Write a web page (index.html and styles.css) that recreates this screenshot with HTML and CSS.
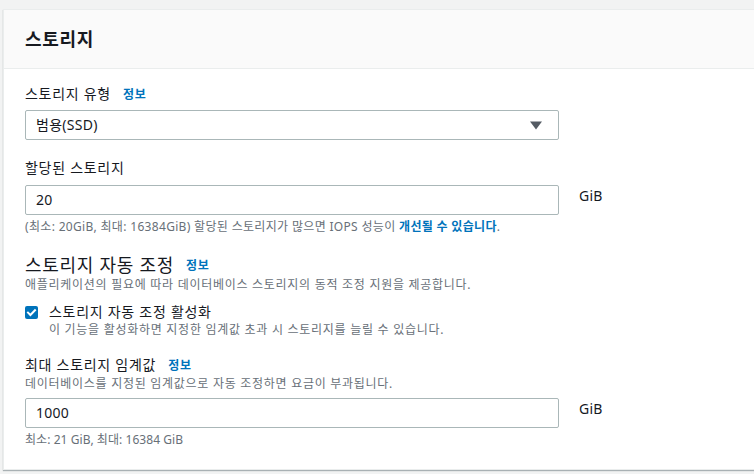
FILE: index.html
```html
<!DOCTYPE html>
<html lang="ko">
<head>
<meta charset="utf-8">
<title>스토리지</title>
<link rel="stylesheet" href="styles.css">
</head>
<body>
<div class="card">
  <div class="card-header">
    <h2 class="card-title">스토리지</h2>
  </div>
  <div class="card-body">
    <div class="field field-type">
      <div class="label-row"><span class="label">스토리지 유형</span><a class="info">정보</a></div>
      <div class="control-row">
        <div class="select">
          <span>범용(SSD)</span>
          <svg class="caret" width="12" height="9" viewBox="0 0 12 9"><path d="M0 0.5h12L6 8.5z" fill="#545b64"/></svg>
        </div>
      </div>
    </div>

    <div class="field field-alloc">
      <div class="label-row"><span class="label">할당된 스토리지</span></div>
      <div class="control-row">
        <div class="input">20</div>
        <span class="unit">GiB</span>
      </div>
      <div class="help help-wide">(최소: 20GiB, 최대: 16384GiB) 할당된 스토리지가 많으면 IOPS 성능이 <a class="help-link">개선될 수 있습니다</a>.</div>
    </div>

    <div class="section">
      <div class="section-head"><span class="section-title">스토리지 자동 조정</span><a class="info">정보</a></div>
      <div class="desc">애플리케이션의 필요에 따라 데이터베이스 스토리지의 동적 조정 지원을 제공합니다.</div>
      <div class="check-row">
        <span class="checkbox">
          <svg width="13" height="13" viewBox="0 0 13 13"><path d="M3 6.6l2.4 2.4L10 4.2" fill="none" stroke="#fff" stroke-width="2" stroke-linecap="square"/></svg>
        </span>
        <div class="check-text">
          <div class="check-label">스토리지 자동 조정 활성화</div>
          <div class="desc">이 기능을 활성화하면 지정한 임계값 초과 시 스토리지를 늘릴 수 있습니다.</div>
        </div>
      </div>
    </div>

    <div class="field field-max">
      <div class="label-row"><span class="label">최대 스토리지 임계값</span><a class="info">정보</a></div>
      <div class="desc">데이터베이스를 지정된 임계값으로 자동 조정하면 요금이 부과됩니다.</div>
      <div class="control-row">
        <div class="input">1000</div>
        <span class="unit">GiB</span>
      </div>
      <div class="help help-tight">최소: 21 GiB, 최대: 16384 GiB</div>
    </div>
  </div>
</div>
</body>
</html>
```

FILE: styles.css
```css
* { box-sizing: border-box; }
html, body { margin: 0; padding: 0; }
body {
  background: #f2f3f3;
  font-family: "Noto Sans", "Noto Sans CJK KR", sans-serif;
  color: #16191f;
  padding: 9px 0 0 3px;
  overflow: hidden;
  height: 474px;
  letter-spacing: 0.045em;
}
.card {
  background: #fff;
  border: 1px solid #eaeded;
  border-right: none;
  box-shadow: 0 1px 1px 0 rgba(0, 28, 36, 0.3);
  width: calc(100% + 10px);
}
.card-header {
  background: #fafafa;
  border-bottom: 1px solid #eaeded;
  height: 59px;
  padding: 17px 0 0 21px;
}
.card-title {
  margin: 0;
  font-size: 18px;
  line-height: 24px;
  font-weight: 700;
}
.card-body {
  padding: 14px 21px 21px 21px;
}
.label-row {
  display: flex;
  align-items: center;
  gap: 12px;
  height: 22px;
}
.label { font-size: 14px; line-height: 22px; }
.info {
  font-size: 12px;
  font-weight: 700;
  color: #0073bb;
}
.control-row {
  display: flex;
  align-items: flex-start;
  gap: 20px;
}
.select, .input {
  width: 534px;
  height: 30px;
  border: 1px solid #aab7b8;
  border-radius: 2px;
  padding: 0 10px;
  font-size: 14px;
  line-height: 28px;
  letter-spacing: 0.02em;
  display: flex;
  align-items: center;
  justify-content: space-between;
}
.caret { margin-right: 6px; }
.unit {
  font-size: 14px;
  line-height: 22px;
  letter-spacing: 0.02em;
}
.field-type .control-row { margin-top: 5px; }
.field-alloc { margin-top: 17px; }
.field-alloc .control-row { margin-top: 6px; }
.help {
  font-size: 12px;
  line-height: 16px;
  color: #687078;
  margin-top: 4px;
}
.help-wide { letter-spacing: 0.027em; }
.help-tight { letter-spacing: 0.005em; }
.help-link { color: #0073bb; font-weight: 700; }
.section { margin-top: 18px; }
.section-head {
  display: flex;
  align-items: center;
  gap: 12px;
  height: 24px;
}
.section-title { font-size: 18px; line-height: 24px; }
.desc {
  font-size: 12px;
  line-height: 16px;
  color: #687078;
}
.check-row {
  display: flex;
  gap: 11px;
  margin-top: 9px;
}
.checkbox {
  width: 13px;
  height: 13px;
  margin-top: 4px;
  background: #0073bb;
  border-radius: 2px;
  display: flex;
  flex: none;
}
.check-label { font-size: 14px; line-height: 20px; }
.field-max { margin-top: 16px; }
.field-max .control-row { margin-top: 6px; }
```
